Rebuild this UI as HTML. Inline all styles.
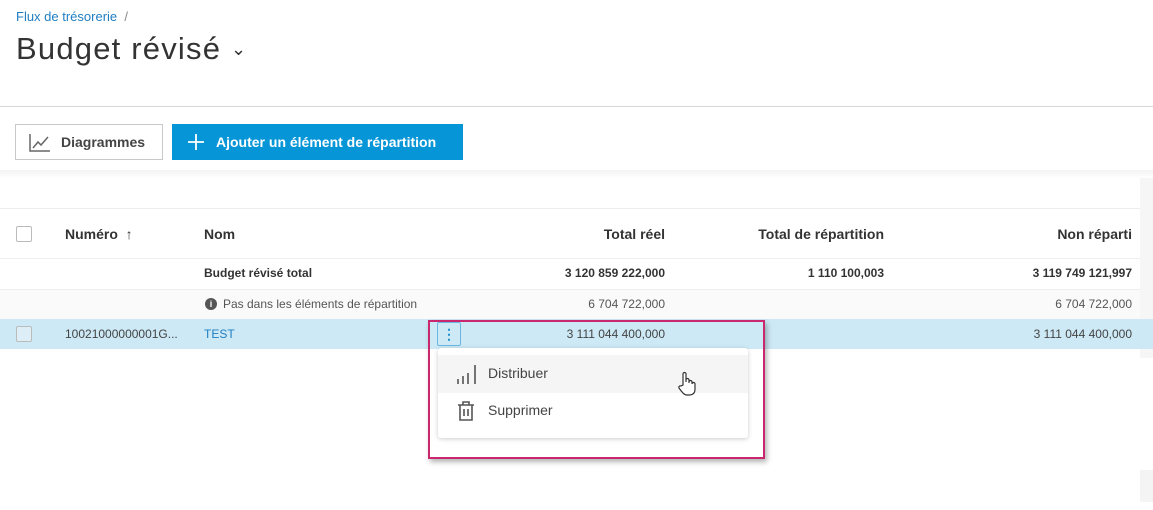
<!DOCTYPE html>
<html><head><meta charset="utf-8"><style>
*{box-sizing:border-box;margin:0;padding:0}
body{width:1153px;height:510px;background:#fff;font-family:"Liberation Sans",sans-serif;color:#333;position:relative;overflow:hidden}
.a{position:absolute;white-space:nowrap}
.b{font-weight:bold}
.r{text-align:right}
</style></head><body>
<div class="a" style="left:16px;top:9px;font-size:13px;color:#1f7ec2">Flux de trésorerie <span style="color:#888">&nbsp;/</span></div>
<div class="a" style="left:16px;top:31px;font-size:31px;color:#333;letter-spacing:1.2px">Budget révisé <span style="font-size:18px;position:relative;top:-4px">&#8964;</span></div>
<div class="a" style="left:0;top:106px;width:1153px;height:1px;background:#d8d8d8"></div>
<div class="a" style="left:15px;top:124px;width:148px;height:36px;border:1px solid #c8c8c8;background:#fff"></div>
<svg class="a" style="left:29px;top:133px" width="22" height="20" viewBox="0 0 22 20" fill="none" stroke="#666" stroke-width="1.5"><path d="M1 1V18H21"/><path d="M4 15L9 9L12 12L19 4"/></svg>
<div class="a b" style="left:61px;top:134px;font-size:14px;color:#444">Diagrammes</div>
<div class="a" style="left:172px;top:124px;width:291px;height:36px;background:#0696d7"></div>
<svg class="a" style="left:187px;top:133px" width="18" height="18" viewBox="0 0 18 18" stroke="#fff" stroke-width="1.8"><path d="M9 1V17M1 9H17"/></svg>
<div class="a b" style="left:216px;top:134px;font-size:14px;color:#fff">Ajouter un élément de répartition</div>
<div class="a" style="left:0;top:170px;width:1153px;height:8px;background:linear-gradient(#f3f3f3,#fff)"></div>
<div class="a" style="left:0;top:208px;width:1140px;height:1px;background:#eee"></div>
<div class="a" style="left:1140px;top:178px;width:13px;height:180px;background:#f6f6f6"></div>
<div class="a" style="left:16px;top:226px;width:16px;height:16px;border:1px solid #bbb;border-radius:2px"></div>
<div class="a b" style="left:65px;top:226px;font-size:14px">Numéro &nbsp;↑</div>
<div class="a b" style="left:204px;top:226px;font-size:14px">Nom</div>
<div class="a b r" style="left:500px;width:165px;top:226px;font-size:14px">Total réel</div>
<div class="a b r" style="left:700px;width:184px;top:226px;font-size:14px">Total de répartition</div>
<div class="a b r" style="left:950px;width:182px;top:226px;font-size:14px">Non réparti</div>
<div class="a" style="left:0;top:258px;width:1140px;height:1px;background:#eee"></div>
<div class="a b" style="left:204px;top:266px;font-size:12px">Budget révisé total</div>
<div class="a b r" style="left:500px;width:165px;top:266px;font-size:12px">3 120 859 222,000</div>
<div class="a b r" style="left:700px;width:184px;top:266px;font-size:12px">1 110 100,003</div>
<div class="a b r" style="left:950px;width:182px;top:266px;font-size:12px">3 119 749 121,997</div>
<div class="a" style="left:0;top:289px;width:1140px;height:30px;background:#fafafa;border-top:1px solid #eee"></div>
<div class="a" style="left:205px;top:298px;width:12px;height:12px;border-radius:50%;background:#555;color:#fff;font-size:9px;text-align:center;line-height:12px;font-weight:bold">i</div>
<div class="a" style="left:223px;top:297px;font-size:12px;color:#555">Pas dans les éléments de répartition</div>
<div class="a r" style="left:500px;width:165px;top:297px;font-size:12px;color:#555">6 704 722,000</div>
<div class="a r" style="left:950px;width:182px;top:297px;font-size:12px;color:#555">6 704 722,000</div>
<div class="a" style="left:0;top:319px;width:1153px;height:30px;background:#cde9f5"></div>
<div class="a" style="left:16px;top:326px;width:16px;height:16px;border:1px solid #bbb;border-radius:2px;background:#ddeef6"></div>
<div class="a" style="left:65px;top:327px;font-size:12px;color:#444">10021000000001G...</div>
<div class="a" style="left:204px;top:327px;font-size:12px;color:#1f7ec2">TEST</div>
<div class="a" style="left:437px;top:322px;width:24px;height:24px;border:1px solid #6ab8e2;border-radius:2px;color:#1f8fd0;text-align:center;font-size:14px;line-height:22px;font-weight:bold">⋮</div>
<div class="a r" style="left:500px;width:165px;top:327px;font-size:12px;color:#444">3 111 044 400,000</div>
<div class="a r" style="left:950px;width:182px;top:327px;font-size:12px;color:#444">3 111 044 400,000</div>
<div class="a" style="left:428px;top:320px;width:337px;height:139px;border:2px solid #c9286e;box-shadow:2px 3px 5px rgba(0,0,0,.3)"></div>
<div class="a" style="left:438px;top:348px;width:310px;height:90px;background:#fff;border-radius:3px;box-shadow:0 1px 5px rgba(0,0,0,.2)"></div>
<div class="a" style="left:438px;top:355px;width:310px;height:38px;background:#f5f5f5"></div>
<svg class="a" style="left:456px;top:363px" width="22" height="22" viewBox="0 0 22 22" stroke="#555" stroke-width="1.6"><path d="M2 16V21M7 13V21M12 10V21M19 2V21"/></svg>
<div class="a" style="left:488px;top:365px;font-size:14px;color:#444">Distribuer</div>
<svg class="a" style="left:456px;top:400px" width="20" height="22" viewBox="0 0 20 22" fill="none" stroke="#555" stroke-width="1.6"><path d="M2 5H18M7 5V2H13V5M4 5V20H16V5M8 9V16M12 9V16"/></svg>
<div class="a" style="left:488px;top:402px;font-size:14px;color:#444">Supprimer</div>
<svg class="a" style="left:677px;top:371px" width="20" height="26" viewBox="0 0 20 26" fill="#fff" stroke="#333" stroke-width="1.2"><path d="M6 14V3a1.5 1.5 0 0 1 3 0v8V9a1.5 1.5 0 0 1 3 0v3V11a1.5 1.5 0 0 1 3 0v2a1.5 1.5 0 0 1 3 0v5c0 4-2 6-6 6H10C7 24 5 21 2 17a1.5 1.5 0 0 1 2-2z"/></svg>
<div class="a" style="left:1140px;top:470px;width:13px;height:32px;background:#f4f4f4"></div>
</body></html>
